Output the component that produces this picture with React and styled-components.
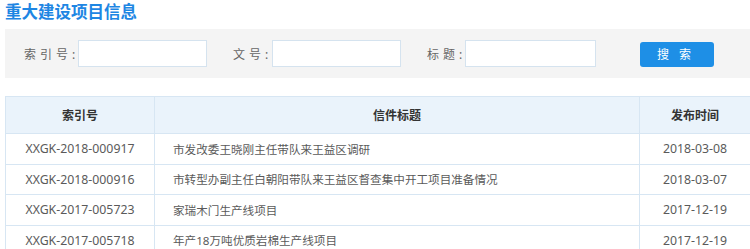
import React from 'react';
import styled, { createGlobalStyle } from 'styled-components';

const GlobalStyle = createGlobalStyle`
    body {
        margin: 0;
        background: #ffffff;
        font-family: "Noto Sans", "Noto Sans CJK SC", sans-serif;
        overflow: hidden;
    }
`;

const Page = styled.div`
    padding: 0 0 0 5px;
    width: 745px;
`;

const Title = styled.h2`
    margin: 0;
    padding-top: 1px;
    height: 28px;
    line-height: 22px;
    font-size: 16.5px;
    font-weight: bold;
    color: #1e86e3;
`;

const SearchBar = styled.div`
    background: #f4f4f4;
    height: 49px;
    display: flex;
    align-items: center;
    padding-left: 19px;
`;

const Field = styled.div`
    display: flex;
    align-items: center;
    margin-right: ${p => p.gap || 26}px;
`;

const Label = styled.label`
    width: ${p => p.width}px;
    font-size: 12px;
    color: #666;
    letter-spacing: 4px;
    white-space: nowrap;
`;

const Input = styled.input`
    box-sizing: border-box;
    width: ${p => p.width || 129}px;
    height: 27px;
    border: 1px solid #d5e3ef;
    background: #fff;
    outline: none;
`;

const Button = styled.button`
    width: 74px;
    height: 25px;
    border: none;
    border-radius: 3px;
    background: #1e8fe6;
    color: #fff;
    font-size: 12px;
    font-family: inherit;
    letter-spacing: 10px;
    padding-left: 10px;
    margin-top: 1px;
`;

const Table = styled.table`
    margin-top: 18px;
    width: 745px;
    border-collapse: collapse;
    table-layout: fixed;
    color: #5a5a5a;
`;

const Th = styled.th`
    height: 34px;
    background: #eaf3fb;
    border: 1px solid #d7e6f3;
    font-weight: bold;
    color: #333;
    font-size: 12px;
    text-align: center;
`;

const Td = styled.td`
    height: 29.5px;
    border: 1px solid #d7e6f3;
    font-size: ${p => (p.align === 'left' ? '11.6px' : '12.3px')};
    text-align: ${p => p.align || 'center'};
    padding: ${p => (p.align === 'left' ? '0 0 0 18px' : '0')};
    white-space: nowrap;
    overflow: hidden;
`;

const rows = [
    ['XXGK-2018-000917', '市发改委王晓刚主任带队来王益区调研', '2018-03-08'],
    ['XXGK-2018-000916', '市转型办副主任白朝阳带队来王益区督查集中开工项目准备情况', '2018-03-07'],
    ['XXGK-2017-005723', '家瑞木门生产线项目', '2017-12-19'],
    ['XXGK-2017-005718', '年产18万吨优质岩棉生产线项目', '2017-12-19'],
];

class App extends React.Component {
    render() {
        return (
            <Page>
                <GlobalStyle />
                <Title>重大建设项目信息</Title>
                <SearchBar>
                    <Field>
                        <Label width={54}>索引号:</Label>
                        <Input />
                    </Field>
                    <Field>
                        <Label width={39}>文号:</Label>
                        <Input />
                    </Field>
                    <Field gap={44}>
                        <Label width={38}>标题:</Label>
                        <Input width={131} />
                    </Field>
                    <Button>搜索</Button>
                </SearchBar>
                <Table>
                    <colgroup>
                        <col style={{ width: 149 }} />
                        <col style={{ width: 485 }} />
                        <col style={{ width: 111 }} />
                    </colgroup>
                    <thead>
                        <tr>
                            <Th>索引号</Th>
                            <Th>信件标题</Th>
                            <Th>发布时间</Th>
                        </tr>
                    </thead>
                    <tbody>
                        {rows.map(r => (
                            <tr key={r[0]}>
                                <Td>{r[0]}</Td>
                                <Td align="left">{r[1]}</Td>
                                <Td>{r[2]}</Td>
                            </tr>
                        ))}
                    </tbody>
                </Table>
            </Page>
        );
    }
}

export default App;
